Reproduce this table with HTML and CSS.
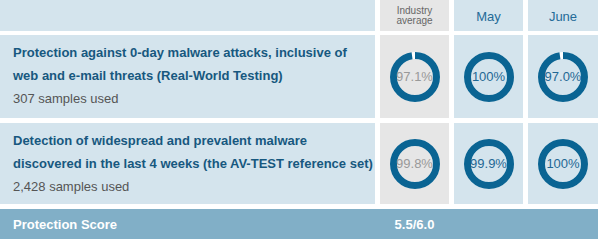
FILE: index.html
```html
<!DOCTYPE html>
<html>
<head>
<meta charset="utf-8">
<link rel="stylesheet" href="styles.css">
</head>
<body>
<div class="table">
  <div class="cell head"></div>
  <div class="cell head gray small">Industry<br>average</div>
  <div class="cell head month">May</div>
  <div class="cell head month">June</div>

  <div class="cell label row1">
    <div class="title">Protection against 0-day malware attacks, inclusive of<br>web and e-mail threats (Real-World Testing)</div>
    <div class="samples">307 samples used</div>
  </div>
  <div class="cell gray ringcell">
    <div class="ring avg">
      <svg viewBox="0 0 50 50" width="50" height="50"><circle class="track" cx="25" cy="25" r="21.5"/><circle class="arc" cx="25" cy="25" r="21.5" stroke-dasharray="131.17 200"/></svg>
      <span class="pct">97.1%</span>
    </div>
  </div>
  <div class="cell ringcell">
    <div class="ring">
      <svg viewBox="0 0 50 50" width="50" height="50"><circle class="track" cx="25" cy="25" r="21.5"/><circle class="arc" cx="25" cy="25" r="21.5" stroke-dasharray="135.09 200"/></svg>
      <span class="pct">100%</span>
    </div>
  </div>
  <div class="cell ringcell">
    <div class="ring">
      <svg viewBox="0 0 50 50" width="50" height="50"><circle class="track" cx="25" cy="25" r="21.5"/><circle class="arc" cx="25" cy="25" r="21.5" stroke-dasharray="131.04 200"/></svg>
      <span class="pct">97.0%</span>
    </div>
  </div>

  <div class="cell label row2">
    <div class="title">Detection of widespread and prevalent malware<br>discovered in the last 4 weeks (the AV-TEST reference set)</div>
    <div class="samples">2,428 samples used</div>
  </div>
  <div class="cell gray ringcell">
    <div class="ring avg">
      <svg viewBox="0 0 50 50" width="50" height="50"><circle class="track" cx="25" cy="25" r="21.5"/><circle class="arc" cx="25" cy="25" r="21.5" stroke-dasharray="134.82 200"/></svg>
      <span class="pct">99.8%</span>
    </div>
  </div>
  <div class="cell ringcell">
    <div class="ring">
      <svg viewBox="0 0 50 50" width="50" height="50"><circle class="track" cx="25" cy="25" r="21.5"/><circle class="arc" cx="25" cy="25" r="21.5" stroke-dasharray="134.95 200"/></svg>
      <span class="pct">99.9%</span>
    </div>
  </div>
  <div class="cell ringcell">
    <div class="ring">
      <svg viewBox="0 0 50 50" width="50" height="50"><circle class="track" cx="25" cy="25" r="21.5"/><circle class="arc" cx="25" cy="25" r="21.5" stroke-dasharray="135.09 200"/></svg>
      <span class="pct">100%</span>
    </div>
  </div>

  <div class="footer">
    <div class="flabel">Protection Score</div>
    <div class="fscore">5.5/6.0</div>
  </div>
</div>
</body>
</html>
```

FILE: styles.css
```css
html, body {
  margin: 0;
  padding: 0;
  background: #ffffff;
}
body {
  font-family: "Liberation Sans", Arial, sans-serif;
  width: 600px;
  height: 243px;
  overflow: hidden;
}
.table {
  display: grid;
  grid-template-columns: 375px 69px 69px 70px;
  grid-template-rows: 31px 83px 82px 31px;
  column-gap: 5px;
  row-gap: 4px;
  width: 598px;
}
.cell {
  background: #d4e4ed;
}
.cell.gray {
  background: #e6e6e6;
}
.head {
  display: flex;
  align-items: center;
  justify-content: center;
  text-align: center;
}
.small {
  font-size: 10px;
  line-height: 10px;
  color: #666666;
  padding-top: 1px;
}
.month {
  font-size: 13px;
  color: #256b98;
  padding-top: 2px;
}
.label {
  padding: 6px 0 0 13px;
  white-space: nowrap;
  overflow: hidden;
}
.row2 {
  margin-top: 1px;
}
.title {
  font-size: 13px;
  font-weight: bold;
  line-height: 23px;
  color: #17587f;
}
.samples {
  font-size: 13px;
  line-height: 23px;
  color: #555555;
}
.ringcell {
  display: flex;
  align-items: center;
  justify-content: center;
}
.row2 ~ .ringcell {
  margin-top: 1px;
}
.ring {
  display: grid;
  place-items: center;
  width: 50px;
  height: 50px;
}
.ring svg, .ring .pct {
  grid-area: 1 / 1;
}
.ring svg {
  display: block;
}
.track {
  fill: none;
  stroke: #ffffff;
  stroke-width: 7;
}
.arc {
  fill: none;
  stroke: #0a6493;
  stroke-width: 7;
  transform: rotate(-90deg);
  transform-origin: 25px 25px;
}
.pct {
  font-size: 13px;
  color: #1f6894;
  position: relative;
  z-index: 1;
  white-space: nowrap;
}
.avg .pct {
  color: #999999;
}
.footer {
  grid-column: 1 / 5;
  display: grid;
  grid-template-columns: 375px 69px 69px 70px;
  column-gap: 5px;
  background: #81afc7;
  align-items: center;
  color: #ffffff;
  font-size: 13px;
  font-weight: bold;
  margin-top: 1px;
}
.flabel {
  padding-left: 13px;
}
.fscore {
  text-align: center;
}
```
